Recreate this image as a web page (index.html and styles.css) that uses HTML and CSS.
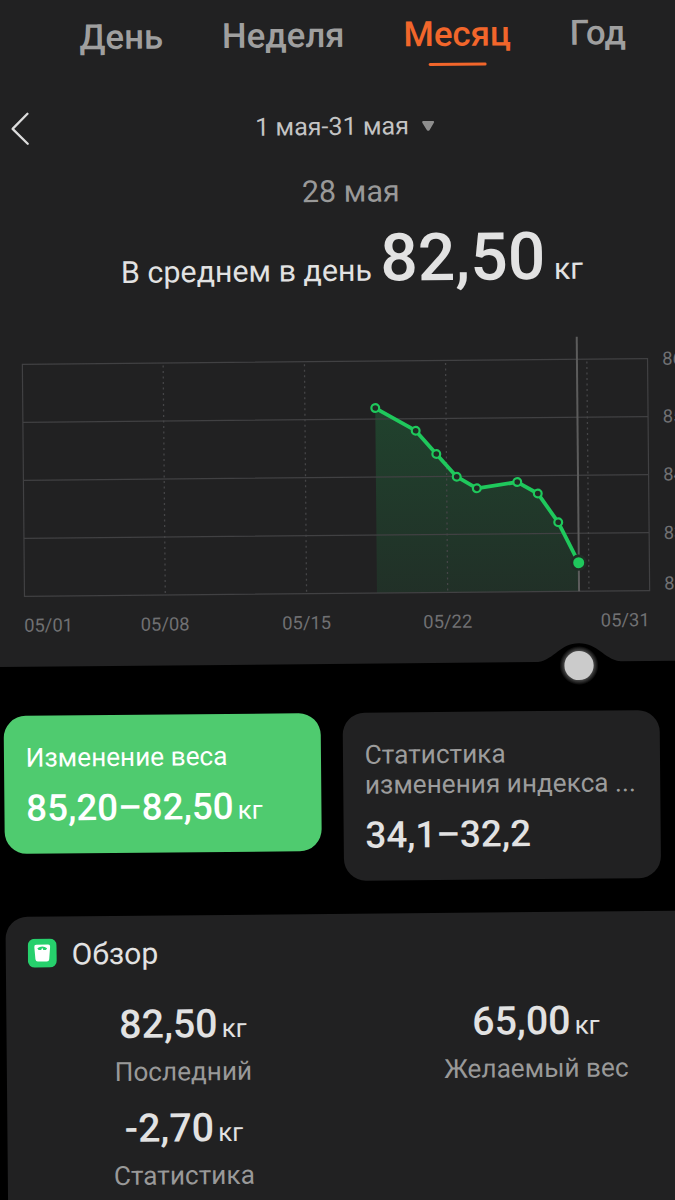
FILE: index.html
```html
<!DOCTYPE html>
<html lang="ru">
<head>
  <meta charset="UTF-8" />
  <title>Вес</title>
  <link rel="stylesheet" href="styles.css">
</head>
<body>

  <div class="screen">

    <!-- Top panel: tabs, period, chart -->
    <section class="panel">
      <nav class="tabs">
        <a class="tab">День</a>
        <a class="tab">Неделя</a>
        <a class="tab active">Месяц</a>
        <a class="tab">Год</a>
      </nav>

      <div class="period">
        <svg class="back" width="18" height="34" viewBox="0 0 18 34">
          <path d="M16.4 2 L1.4 17 L16.4 32" />
        </svg>
        <div class="range">
          <span>1 мая-31 мая</span>
          <svg width="14" height="12" viewBox="0 0 14 12">
            <path d="M2 2 H12 L7.4 9.6 H6.6 Z" />
          </svg>
        </div>
      </div>

      <div class="day">28 мая</div>

      <div class="average">
        <span class="average-label">В среднем в день</span>
        <span class="average-value">82,50</span>
        <span class="average-unit">кг</span>
      </div>

      <svg class="chart" width="750" height="337" viewBox="-25 330 750 337">
        <defs>
          <linearGradient id="fill" x1="0" y1="0" x2="0" y2="1">
            <stop offset="0" stop-color="#1fc85c" stop-opacity="0.2" />
            <stop offset="1" stop-color="#1fc85c" stop-opacity="0.09" />
          </linearGradient>
          <radialGradient id="glow">
            <stop offset="0.68" stop-color="#cbcbcb" stop-opacity="0.45" />
            <stop offset="1" stop-color="#cbcbcb" stop-opacity="0" />
          </radialGradient>
        </defs>

        <path class="area" d="M371.5 411.5 L411.7 434.5 L432.1 458 L452.3 480.9 L472.3 492.7 L512.8 486.8 L533.2 498.4 L553.4 527.4 L573.5 568 V596.5 H371.5 Z" />

        <g class="grid">
          <rect x="19" y="364.5" width="625.2" height="232" />
          <path d="M19 422.5 H644.2 M19 480.5 H644.2 M19 538.5 H644.2" />
        </g>
        <path class="weeks" d="M159.8 367 V596 M301.1 367 V596 M442.2 367 V596 M583.5 367 V596" />

        <path class="cursor" d="M573.6 342 V596.5" />
        <path class="line" d="M371.5 411.5 L411.7 434.5 L432.1 458 L452.3 480.9 L472.3 492.7 L512.8 486.8 L533.2 498.4 L553.4 527.4 L573.5 568" />
        <g class="dots">
          <circle cx="371.5" cy="411.5" r="3.9" />
          <circle cx="411.7" cy="434.5" r="3.9" />
          <circle cx="432.1" cy="458" r="3.9" />
          <circle cx="452.3" cy="480.9" r="3.9" />
          <circle cx="472.3" cy="492.7" r="3.9" />
          <circle cx="512.8" cy="486.8" r="3.9" />
          <circle cx="533.2" cy="498.4" r="3.9" />
          <circle cx="553.4" cy="527.4" r="3.9" />
        </g>
        <circle class="dot-current" cx="573.5" cy="568" r="6.8" />

        <g class="axis">
          <text x="18.4" y="632">05/01</text>
          <text x="159.4" y="632" text-anchor="middle">05/08</text>
          <text x="300.9" y="632" text-anchor="middle">05/15</text>
          <text x="442" y="632" text-anchor="middle">05/22</text>
          <text x="644" y="632" text-anchor="end">05/31</text>
          <text x="658.8" y="370.8">86</text>
          <text x="658.8" y="428.6">85</text>
          <text x="658.8" y="486.6">84</text>
          <text x="658.8" y="545">83</text>
          <text x="658.8" y="595.6">82</text>
        </g>

        <!-- Slider handle on the lower edge -->
        <path class="hump" d="M532 668 V667 C549 664 554 648.5 573 648.5 C592 648.5 597 664 614 667 V668 Z" />
        <circle cx="572.9" cy="670.8" r="19.5" fill="url(#glow)" />
        <circle class="knob" cx="572.9" cy="670.8" r="14.6" />
      </svg>
    </section>

    <!-- Change cards -->
    <section class="cards">
      <div class="card green">
        <div class="card-title">Изменение веса</div>
        <div class="card-value">85,20–82,50<small>кг</small></div>
      </div>
      <div class="card">
        <div class="card-title">Статистика<br>изменения индекса ...</div>
        <div class="card-value">34,1–32,2</div>
      </div>
    </section>

    <!-- Overview -->
    <section class="overview">
      <h2>
        <svg width="29" height="29" viewBox="0 0 29 29">
          <rect width="29" height="29" rx="7" fill="#26d06c" />
          <path d="M8.6 6 H20.4 Q22.6 6 22.4 8.2 L21.4 20.6 Q21.2 22.8 19 22.8 H10 Q7.8 22.8 7.6 20.6 L6.6 8.2 Q6.4 6 8.6 6 Z" fill="#fff" />
          <path d="M9.6 9.6 Q14.5 6.2 19.4 9.6 L18.2 11.4 H15.6 L14.5 9.2 L13.4 11.4 H10.8 Z" fill="#26d06c" />
        </svg>
        <span>Обзор</span>
      </h2>
      <div class="stats">
        <div class="stat">
          <div class="stat-value">82,50<small>кг</small></div>
          <div class="stat-label">Последний</div>
        </div>
        <div class="stat">
          <div class="stat-value">65,00<small>кг</small></div>
          <div class="stat-label">Желаемый вес</div>
        </div>
        <div class="stat">
          <div class="stat-value">-2,70<small>кг</small></div>
          <div class="stat-label">Статистика</div>
        </div>
      </div>
    </section>

  </div>

</body>
</html>
```
FILE: styles.css
```css
body {
  margin: 0;
  height: 1200px;
  overflow: hidden;
  background-color: #000;
  color: #e2e2e2;
  font-family: Roboto, sans-serif;
}

/* The whole screen is slightly tilted */
.screen {
  width: 750px;
  height: 1230px;
  margin-left: -25px;
  overflow: hidden;
  transform: rotate(-0.527deg);
  transform-origin: 25px 0;
}

.panel {
  height: 667px;
  background-color: #212122;
}

/* Tabs */
.tabs {
  display: flex;
  gap: 58.8px;
  height: 96px;
  padding: 14px 0 0 104px;
}

.tab {
  display: flex;
  flex-direction: column;
  align-items: center;
  font-size: 34.8px;
  line-height: 48px;
  font-weight: 500;
  color: #9f9f9f;
}

.tab.active {
  color: #f2662b;
}

.tab.active::after {
  content: "";
  width: 58px;
  height: 3.6px;
  margin-top: 4.8px;
  border-radius: 2px;
  background-color: #f2662b;
}

/* Period picker */
.period {
  display: flex;
  align-items: center;
  height: 38px;
  padding-left: 35px;
  margin-bottom: 27px;
}

.back path {
  fill: none;
  stroke: #dcdcdc;
  stroke-width: 2.3;
  stroke-linecap: round;
  stroke-linejoin: round;
}

.range {
  display: flex;
  align-items: center;
  gap: 12px;
  margin-left: 226px;
  padding-top: 2.5px;
  font-size: 25.1px;
  line-height: 38px;
  color: #c4c4c4;
}

.range svg {
  margin-top: -1px;
}

.range path {
  fill: #8e8e8e;
  stroke: #8e8e8e;
  stroke-width: 2;
  stroke-linejoin: round;
}

.day {
  font-size: 30.5px;
  line-height: 40px;
  text-align: center;
  text-indent: -2px;
  color: #999;
}

.average {
  display: flex;
  justify-content: center;
  align-items: baseline;
  gap: 8.5px;
  height: 80px;
  margin: 6.5px 1px 28.5px 0;
  font-size: 30.4px;
}

.average-value {
  font-size: 66px;
  line-height: 80px;
  font-weight: 500;
}

/* Chart */
.chart {
  display: block;
  overflow: visible;
}

.area {
  fill: url(#fill);
}

.grid {
  fill: none;
  stroke: #414143;
  stroke-width: 1.2;
}

.weeks {
  stroke: #454547;
  stroke-width: 1.3;
  stroke-dasharray: 2 3.5;
}

.cursor {
  stroke: #5c5c5c;
  stroke-width: 2;
}

.line {
  fill: none;
  stroke: #1fc85c;
  stroke-width: 3.8;
  stroke-linejoin: round;
}

.dots circle {
  fill: #212a24;
  stroke: #1fc85c;
  stroke-width: 2.2;
}

.dot-current {
  fill: #1fc85c;
  stroke: #212d26;
  stroke-width: 2.6;
}

.axis {
  font-size: 18.4px;
  fill: #707072;
}

.hump {
  fill: #000;
}

.knob {
  fill: #cbcbcb;
}

/* Cards */
.cards {
  display: flex;
  align-items: flex-start;
  gap: 21.5px;
  box-sizing: border-box;
  height: 250px;
  padding: 49.2px 0 0 21.8px;
}

.card {
  box-sizing: border-box;
  width: 317.4px;
  height: 167.5px;
  padding: 26.5px 22px 0;
  border-radius: 22px;
  background-color: #212122;
}

.card.green {
  height: 137.5px;
  background-color: #4fcb6f;
  color: #fff;
}

.card-title {
  font-size: 26.2px;
  line-height: 30px;
  white-space: nowrap;
  color: #9c9c9c;
}

.green .card-title {
  color: #fff;
}

.card-value {
  font-size: 36.8px;
  line-height: 44px;
  margin-top: 14px;
  font-weight: 500;
}

small {
  font-size: 26px;
  line-height: 1;
  font-weight: 400;
  margin-left: 4px;
}

/* Overview */
.overview {
  box-sizing: border-box;
  width: 706px;
  height: 320px;
  margin-left: 22px;
  padding-top: 16px;
  border-radius: 22px 22px 0 0;
  background-color: #212122;
}

h2 {
  display: flex;
  align-items: center;
  gap: 15px;
  margin: 0 0 25.5px 22px;
  font-size: 30px;
  line-height: 38px;
  font-weight: 400;
}

h2 span {
  padding-top: 3px;
}

.stats {
  display: grid;
  grid-template-columns: 1fr 1fr;
  row-gap: 10.5px;
  text-align: center;
}

.stat-value {
  font-size: 39.4px;
  line-height: 52px;
  font-weight: 500;
}

.stat-label {
  font-size: 26.2px;
  line-height: 40px;
  margin-top: 1.5px;
  color: #999;
}
```
